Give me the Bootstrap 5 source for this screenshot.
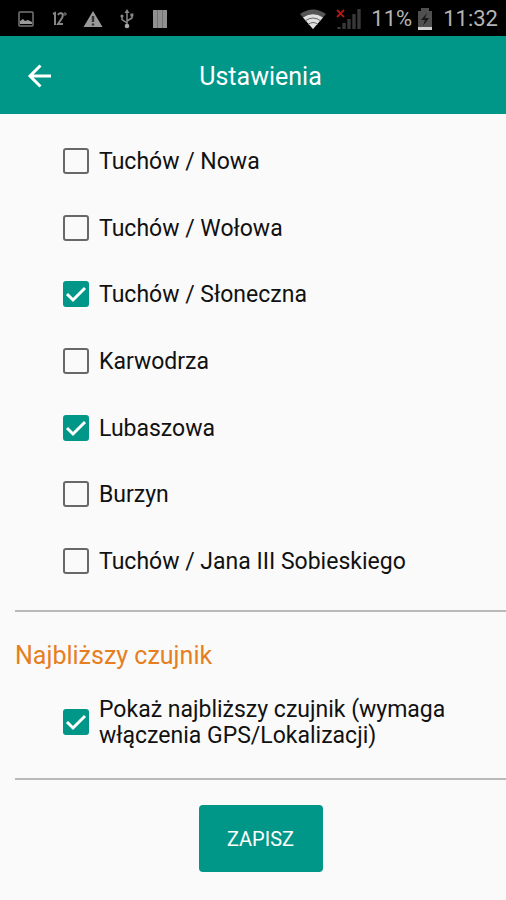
<!DOCTYPE html>
<html lang="pl">
<head>
<meta charset="utf-8">
<meta name="viewport" content="width=device-width, initial-scale=1">
<title>Ustawienia</title>
<link href="https://cdn.jsdelivr.net/npm/bootstrap@5.3.0/dist/css/bootstrap.min.css" rel="stylesheet">
<style>
  :root { --teal: #009688; --page: #fafafa; }
  body { font-family: Roboto, "Noto Sans", sans-serif; background: var(--page); color: #111; }
  .status-bar { min-height: 36px; background: #000; color: #b4b4b4; font-size: 22px; line-height: 34px; padding: 2px 8px 0 17px; }
  .status-bar svg { display: block; flex: none; }
  .status-left { gap: 16px; }
  .status-right { gap: 9px; }
  .level { gap: 4px; }
  .app-bar { background: var(--teal); min-height: 78px; padding: 2px 9px 0 24px; color: #fff; }
  .app-bar .side { width: 32px; }
  .app-title { font-size: 25px; line-height: 32px; padding-top: 1px; }
  .back-btn { width: 32px; height: 32px; }
  .sensor-list { min-height: 466px; margin: 14px 0 16px; grid-auto-rows: 1fr; }
  .option { padding-left: 63px; padding-right: 16px; gap: 10px; font-size: 23px; line-height: 26px; }
  .option label { padding-top: 2px; }
  .option .form-check-input { width: 26px; height: 26px; margin: 0; flex: none; border: 2px solid #686868; border-radius: 3px; background-color: var(--page); }
  .option .form-check-input:checked {
    background-color: var(--teal); border-color: var(--teal); background-origin: border-box; background-size: 26px 26px;
    background-image: url("data:image/svg+xml,%3csvg xmlns='http://www.w3.org/2000/svg' viewBox='0 0 26 26'%3e%3cpath d='M4 13l6 6L22 7' fill='none' stroke='%23fff' stroke-width='3'/%3e%3c/svg%3e");
  }
  .rule { margin: 0 0 0 15px; border-top: 2px solid #b9b9b9; opacity: 1; }
  .section-title { color: #e67e22; font-size: 25px; line-height: 32px; font-weight: 400; padding: 28px 15px 0; }
  .nearest { padding-top: 23px; padding-bottom: 29px; }
  .save-row { padding: 25px 0 28px 15px; }
  .save-btn { --bs-btn-color: #fff; --bs-btn-bg: var(--teal); --bs-btn-hover-color: #fff; --bs-btn-hover-bg: #00897b; --bs-btn-border-radius: 4px; min-width: 124px; min-height: 67px; font-size: 20px; line-height: 24px; }
</style>
</head>
<body>
<div class="status-bar d-flex align-items-center justify-content-between">
  <div class="status-left d-flex align-items-center">
    <svg width="18" height="18" viewBox="0 0 18 18" aria-hidden="true"><rect x="2" y="2" width="14" height="14" rx="1" fill="none" stroke="#777" stroke-width="1.5"/><path d="M3 14v-3l3-2 2 2 3-1 4 2v2z" fill="#999"/></svg>
    <svg width="16" height="18" viewBox="0 0 16 18" aria-hidden="true" fill="none" stroke="#858585" stroke-width="2"><path d="M2 4l2-1v12M7 5q1-2 3-2 3 1 1 5l-4 6h5"/><circle cx="14" cy="4" r="1.2" stroke-width="1"/></svg>
    <svg width="20" height="18" viewBox="0 0 20 18" aria-hidden="true"><path d="M10 1l9.500 16H.5z" fill="#999"/><path d="M10 6v6M10 13.500v2" stroke="#333" stroke-width="2.400"/></svg>
    <svg width="16" height="20" viewBox="0 0 16 20" aria-hidden="true" fill="none" stroke="#888" stroke-width="1.500"><path d="M8 3v14M8 14L3 10.500V7M8 12l5-3V6"/><path d="M8 0l2.500 4h-5z" fill="#888" stroke="none"/><circle cx="8" cy="17" r="2.300" fill="#aaa" stroke="none"/><circle cx="3" cy="7" r="1.600" fill="#888" stroke="none"/><path d="M11.400 4.500h3v3h-3z" fill="#888" stroke="none"/></svg>
    <svg width="18" height="18" viewBox="0 0 18 18" aria-hidden="true"><path d="M2 0h14v18H2z" fill="#909090"/><path d="M6.500 0v18M11.500 0v18" stroke="#727272"/></svg>
  </div>
  <div class="status-right d-flex align-items-center">
    <svg width="28" height="22" viewBox="0 0 28 22" aria-hidden="true"><path d="M14 21L1 6Q14-3 27 6z" fill="#555"/><path d="M14 21L4 9.500Q14 3 24 9.500z" fill="#e0e0e0"/><path d="M6 13Q14 7 22 13M9 16.500Q14 12.500 19 16.500" fill="none" stroke="#666" stroke-width="1"/></svg>
    <svg width="26" height="24" viewBox="0 0 26 24" aria-hidden="true"><path d="M3 22v-2M8 22v-6M13 22V12M18 22V7M23 22V2" stroke="#383838" stroke-width="3.400"/><path d="M1 3l7 7M8 3l-7 7" stroke="#b01818" stroke-width="1.800"/></svg>
    <div class="level d-flex align-items-center">
      <span>11%</span>
      <svg width="18" height="24" viewBox="0 0 18 24" aria-hidden="true"><path d="M5 1h8v3h3v19H2V4h3z" fill="#505050"/><path d="M11 6l-6 7h4l-2 6 6-8H9z" fill="#181818"/><path d="M2 20h14v3H2z" fill="#d0d0d0"/></svg>
    </div>
    <span>11:32</span>
  </div>
</div>
<header class="app-bar d-flex align-items-center justify-content-between">
  <button type="button" class="back-btn btn p-0 border-0 d-flex align-items-center justify-content-center" aria-label="Wstecz">
    <svg width="26" height="26" viewBox="0 0 26 26" fill="none" stroke="#fff" stroke-width="3" aria-hidden="true"><path d="M24 13H4M13.500 2.500L3 13l10.500 10.500"/></svg>
  </button>
  <h1 class="app-title fw-normal mb-0">Ustawienia</h1>
  <span class="side"></span>
</header>
<main>
  <form>
    <div class="sensor-list d-grid">
      <div class="option d-flex align-items-center"><input class="form-check-input" type="checkbox" id="s1"><label for="s1">Tuchów / Nowa</label></div>
      <div class="option d-flex align-items-center"><input class="form-check-input" type="checkbox" id="s2"><label for="s2">Tuchów / Wołowa</label></div>
      <div class="option d-flex align-items-center"><input class="form-check-input" type="checkbox" id="s3" checked><label for="s3">Tuchów / Słoneczna</label></div>
      <div class="option d-flex align-items-center"><input class="form-check-input" type="checkbox" id="s4"><label for="s4">Karwodrza</label></div>
      <div class="option d-flex align-items-center"><input class="form-check-input" type="checkbox" id="s5" checked><label for="s5">Lubaszowa</label></div>
      <div class="option d-flex align-items-center"><input class="form-check-input" type="checkbox" id="s6"><label for="s6">Burzyn</label></div>
      <div class="option d-flex align-items-center"><input class="form-check-input" type="checkbox" id="s7"><label for="s7">Tuchów / Jana III Sobieskiego</label></div>
    </div>
    <hr class="rule">
    <h2 class="section-title m-0">Najbliższy czujnik</h2>
    <div class="option nearest d-flex align-items-center"><input class="form-check-input" type="checkbox" id="near" checked><label for="near">Pokaż najbliższy czujnik (wymaga włączenia GPS/Lokalizacji)</label></div>
    <hr class="rule">
    <div class="save-row d-flex justify-content-center">
      <button type="submit" class="save-btn btn">ZAPISZ</button>
    </div>
  </form>
</main>
<script src="https://cdn.jsdelivr.net/npm/bootstrap@5.3.0/dist/js/bootstrap.bundle.min.js"></script>
</body>
</html>
